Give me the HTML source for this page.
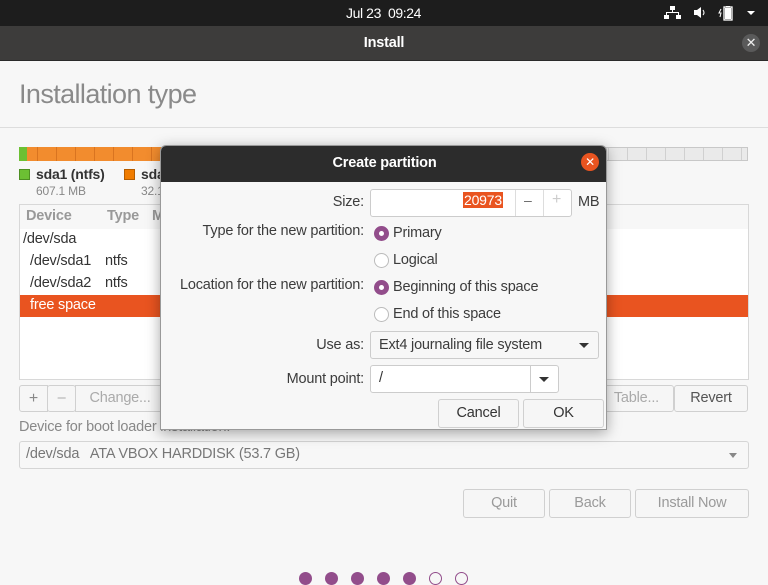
<!DOCTYPE html>
<html><head><style>
*{box-sizing:border-box;margin:0;padding:0}
body{width:768px;height:576px;overflow:hidden;background:#f7f7f7;font-family:"Liberation Sans","DejaVu Sans",sans-serif;font-size:14.5px;color:#3c3c3c;position:relative;letter-spacing:-0.2px}
.a{position:absolute}
.btn{position:absolute;border:1px solid #d0d0d0;border-radius:3px;background:#f6f6f6;text-align:center;color:#9a9a9a;font-size:14.5px}
.t{position:absolute;white-space:nowrap}
.radio{position:absolute;width:15px;height:15px;border-radius:50%;border:1px solid #bbb;background:#fff}
.radio.on{background:#924d8b;border-color:#924d8b}
.radio.on:after{content:"";position:absolute;left:4px;top:4px;width:5px;height:5px;border-radius:50%;background:#fff}
.dot{position:absolute;top:572px;width:13px;height:13px;border-radius:50%;background:#924d8b}
</style></head><body>
<div class="a" style="left:0;top:0;width:768px;height:26px;background:#1d1d1d"></div>
<div class="t" style="left:346px;top:5px;color:#fff;font-size:14px;letter-spacing:-0.4px">Jul 23&nbsp; 09:24</div>
<svg class="a" style="left:662px;top:5px" width="100" height="16">
<g fill="#fff"><rect x="8" y="1" width="5" height="4"/><rect x="10" y="5" width="1" height="3"/><rect x="4" y="7" width="13" height="1"/><rect x="4" y="7" width="1" height="3"/><rect x="16" y="7" width="1" height="3"/><rect x="2" y="10" width="5" height="4"/><rect x="14" y="10" width="5" height="4"/>
<path d="M32 5h3l4-3v11l-4-3h-3z"/><path d="M41 5q2 3 0 5" stroke="#fff" fill="none"/>
<rect x="64" y="1" width="4" height="1"/><rect x="62" y="2" width="8" height="13" fill="none" stroke="#fff" stroke-width="1.3"/><rect x="63" y="3" width="6" height="11"/><path d="M59 4l-2 4h2l-1 4" stroke="#fff" fill="none"/>
<path d="M85 6h8l-4 4z"/></g></svg>
<div class="a" style="left:0;top:26px;width:768px;height:35px;background:#3d3c3b;border-bottom:1px solid #2a2a2a"></div>
<div class="t" style="left:0;width:768px;top:35px;text-align:center;color:#fff;font-weight:bold;font-size:14.5px">Install</div>
<div class="a" style="left:742px;top:34px;width:18px;height:18px;border-radius:50%;background:#5a5a5a;color:#eee;text-align:center;font-size:13px;line-height:18px">✕</div>
<div class="t" style="left:19px;top:79px;font-size:27px;color:#8a8a8a;letter-spacing:-0.6px">Installation type</div>
<div class="a" style="left:0;top:127px;width:768px;height:1px;background:#ddd"></div>
<div class="a" style="left:19px;top:147px;width:729px;height:14px;border:1px solid #c8c8c8;background:repeating-linear-gradient(90deg,#eaeaea 0 18px,#d0d0d0 18px 19px)"></div>
<div class="a" style="left:19px;top:147px;width:400px;height:14px;background:repeating-linear-gradient(90deg,#f28c2e 0 18px,#d97420 18px 19px)"></div>
<div class="a" style="left:19px;top:147px;width:8px;height:14px;background:#6cc033"></div>
<div class="a" style="left:19px;top:169px;width:11px;height:11px;background:#6cc033;border:1px solid #4d8f22"></div>
<div class="t" style="left:36px;top:166px;font-weight:bold;font-size:14px;color:#333">sda1 (ntfs)</div>
<div class="t" style="left:36px;top:184px;font-size:12px;color:#888">607.1 MB</div>
<div class="a" style="left:124px;top:169px;width:11px;height:11px;background:#f07c00;border:1px solid #b55d00"></div>
<div class="t" style="left:141px;top:166px;font-weight:bold;font-size:14px;color:#333">sda2</div>
<div class="t" style="left:141px;top:184px;font-size:12px;color:#888">32.1</div>
<div class="a" style="left:19px;top:204px;width:730px;height:176px;background:#fff;border:1px solid #d8d8d8"></div>
<div class="a" style="left:20px;top:205px;width:728px;height:24px;background:#f7f7f7"></div>
<div class="t" style="left:26px;top:208px;color:#999;font-weight:bold">Device</div>
<div class="t" style="left:107px;top:208px;color:#999;font-weight:bold">Type</div>
<div class="t" style="left:152px;top:208px;color:#999;font-weight:bold">M</div>
<div class="t" style="left:23px;top:231px;color:#333">/dev/sda</div>
<div class="t" style="left:30px;top:253px;color:#333">/dev/sda1</div><div class="t" style="left:105px;top:253px;color:#333">ntfs</div>
<div class="t" style="left:30px;top:275px;color:#333">/dev/sda2</div><div class="t" style="left:105px;top:275px;color:#333">ntfs</div>
<div class="a" style="left:20px;top:295px;width:728px;height:22px;background:#e95420"></div>
<div class="t" style="left:30px;top:297px;color:#fff">free space</div>
<div class="btn" style="left:19px;top:385px;width:29px;height:27px;line-height:25px;font-size:16px;color:#888;border-radius:3px 0 0 3px">+</div>
<div class="btn" style="left:47px;top:385px;width:29px;height:27px;line-height:25px;color:#aaa">–</div>
<div class="btn" style="left:75px;top:385px;width:90px;height:27px;line-height:25px;color:#aaa;border-radius:0 3px 3px 0">Change...</div>
<div class="btn" style="left:590px;top:385px;width:84px;height:27px;line-height:25px;color:#aaa;text-align:right;padding-right:14px">Table...</div>
<div class="btn" style="left:674px;top:385px;width:74px;height:27px;line-height:25px;color:#555">Revert</div>
<div class="t" style="left:19px;top:419px;color:#888">Device for boot loader installation:</div>
<div class="a" style="left:19px;top:441px;width:730px;height:28px;border:1px solid #d5d5d5;border-radius:3px;background:#f7f7f7"></div>
<div class="t" style="left:26px;top:446px;color:#777">/dev/sda&nbsp;&nbsp; ATA VBOX HARDDISK (53.7 GB)</div>
<div class="a" style="left:729px;top:453px;border:4px solid transparent;border-top:5px solid #888"></div>
<div class="btn" style="left:463px;top:489px;width:82px;height:29px;line-height:27px">Quit</div>
<div class="btn" style="left:549px;top:489px;width:82px;height:29px;line-height:27px">Back</div>
<div class="btn" style="left:635px;top:489px;width:114px;height:29px;line-height:27px">Install Now</div>
<div class="dot" style="left:299px"></div><div class="dot" style="left:325px"></div><div class="dot" style="left:351px"></div><div class="dot" style="left:377px"></div><div class="dot" style="left:403px"></div>
<div class="dot" style="left:429px;background:none;border:1px solid #924d8b"></div><div class="dot" style="left:455px;background:none;border:1px solid #924d8b"></div>
<div class="a" style="left:160px;top:145px;width:447px;height:285px;background:#f7f7f7;border:1px solid #999;border-radius:6px 6px 0 0;box-shadow:0 3px 14px rgba(0,0,0,.35);overflow:hidden">
<div class="a" style="left:0;top:0;width:447px;height:36px;background:#2c2c2c"></div>
<div class="t" style="left:0;width:447px;top:9px;text-align:center;color:#fff;font-weight:bold;font-size:14.5px">Create partition</div>
<div class="a" style="left:420px;top:7px;width:18px;height:18px;border-radius:50%;background:#e95420;color:#fff;text-align:center;line-height:18px;font-size:12px">✕</div>
</div>
<div class="t" style="left:160px;width:204px;top:194px;text-align:right">Size:</div>
<div class="a" style="left:370px;top:189px;width:202px;height:28px;background:#fff;border:1px solid #ccc;border-radius:3px"></div>
<div class="a" style="left:515px;top:190px;width:1px;height:26px;background:#ddd"></div>
<div class="a" style="left:543px;top:190px;width:1px;height:26px;background:#ddd"></div>
<div class="t" style="left:463px;top:192px;background:#e95420;color:#fff;padding:0 1px;font-size:14px">20973</div>
<div class="t" style="left:524px;top:192px;color:#666;font-size:14px">–</div>
<div class="t" style="left:552px;top:191px;color:#ccc;font-size:16px">+</div>
<div class="t" style="left:578px;top:194px">MB</div>
<div class="t" style="left:160px;width:204px;top:223px;text-align:right">Type for the new partition:</div>
<div class="radio on" style="left:374px;top:226px"></div><div class="t" style="left:393px;top:225px">Primary</div>
<div class="radio" style="left:374px;top:253px"></div><div class="t" style="left:393px;top:252px">Logical</div>
<div class="t" style="left:160px;width:204px;top:277px;text-align:right">Location for the new partition:</div>
<div class="radio on" style="left:374px;top:280px"></div><div class="t" style="left:393px;top:279px">Beginning of this space</div>
<div class="radio" style="left:374px;top:307px"></div><div class="t" style="left:393px;top:306px">End of this space</div>
<div class="t" style="left:160px;width:204px;top:337px;text-align:right">Use as:</div>
<div class="a" style="left:370px;top:331px;width:229px;height:28px;background:#f7f7f7;border:1px solid #ccc;border-radius:3px"></div>
<div class="t" style="left:379px;top:337px">Ext4 journaling file system</div>
<div class="a" style="left:579px;top:343px;border:5px solid transparent;border-top:5px solid #333"></div>
<div class="t" style="left:160px;width:204px;top:371px;text-align:right">Mount point:</div>
<div class="a" style="left:370px;top:365px;width:189px;height:28px;background:#fff;border:1px solid #ccc;border-radius:3px"></div>
<div class="a" style="left:530px;top:366px;width:1px;height:26px;background:#ccc"></div>
<div class="t" style="left:379px;top:370px;color:#333">/</div>
<div class="a" style="left:539px;top:377px;border:5px solid transparent;border-top:5px solid #333"></div>
<div class="btn" style="left:438px;top:399px;width:81px;height:29px;line-height:27px;color:#333">Cancel</div>
<div class="btn" style="left:523px;top:399px;width:81px;height:29px;line-height:27px;color:#333">OK</div>
</body></html>
